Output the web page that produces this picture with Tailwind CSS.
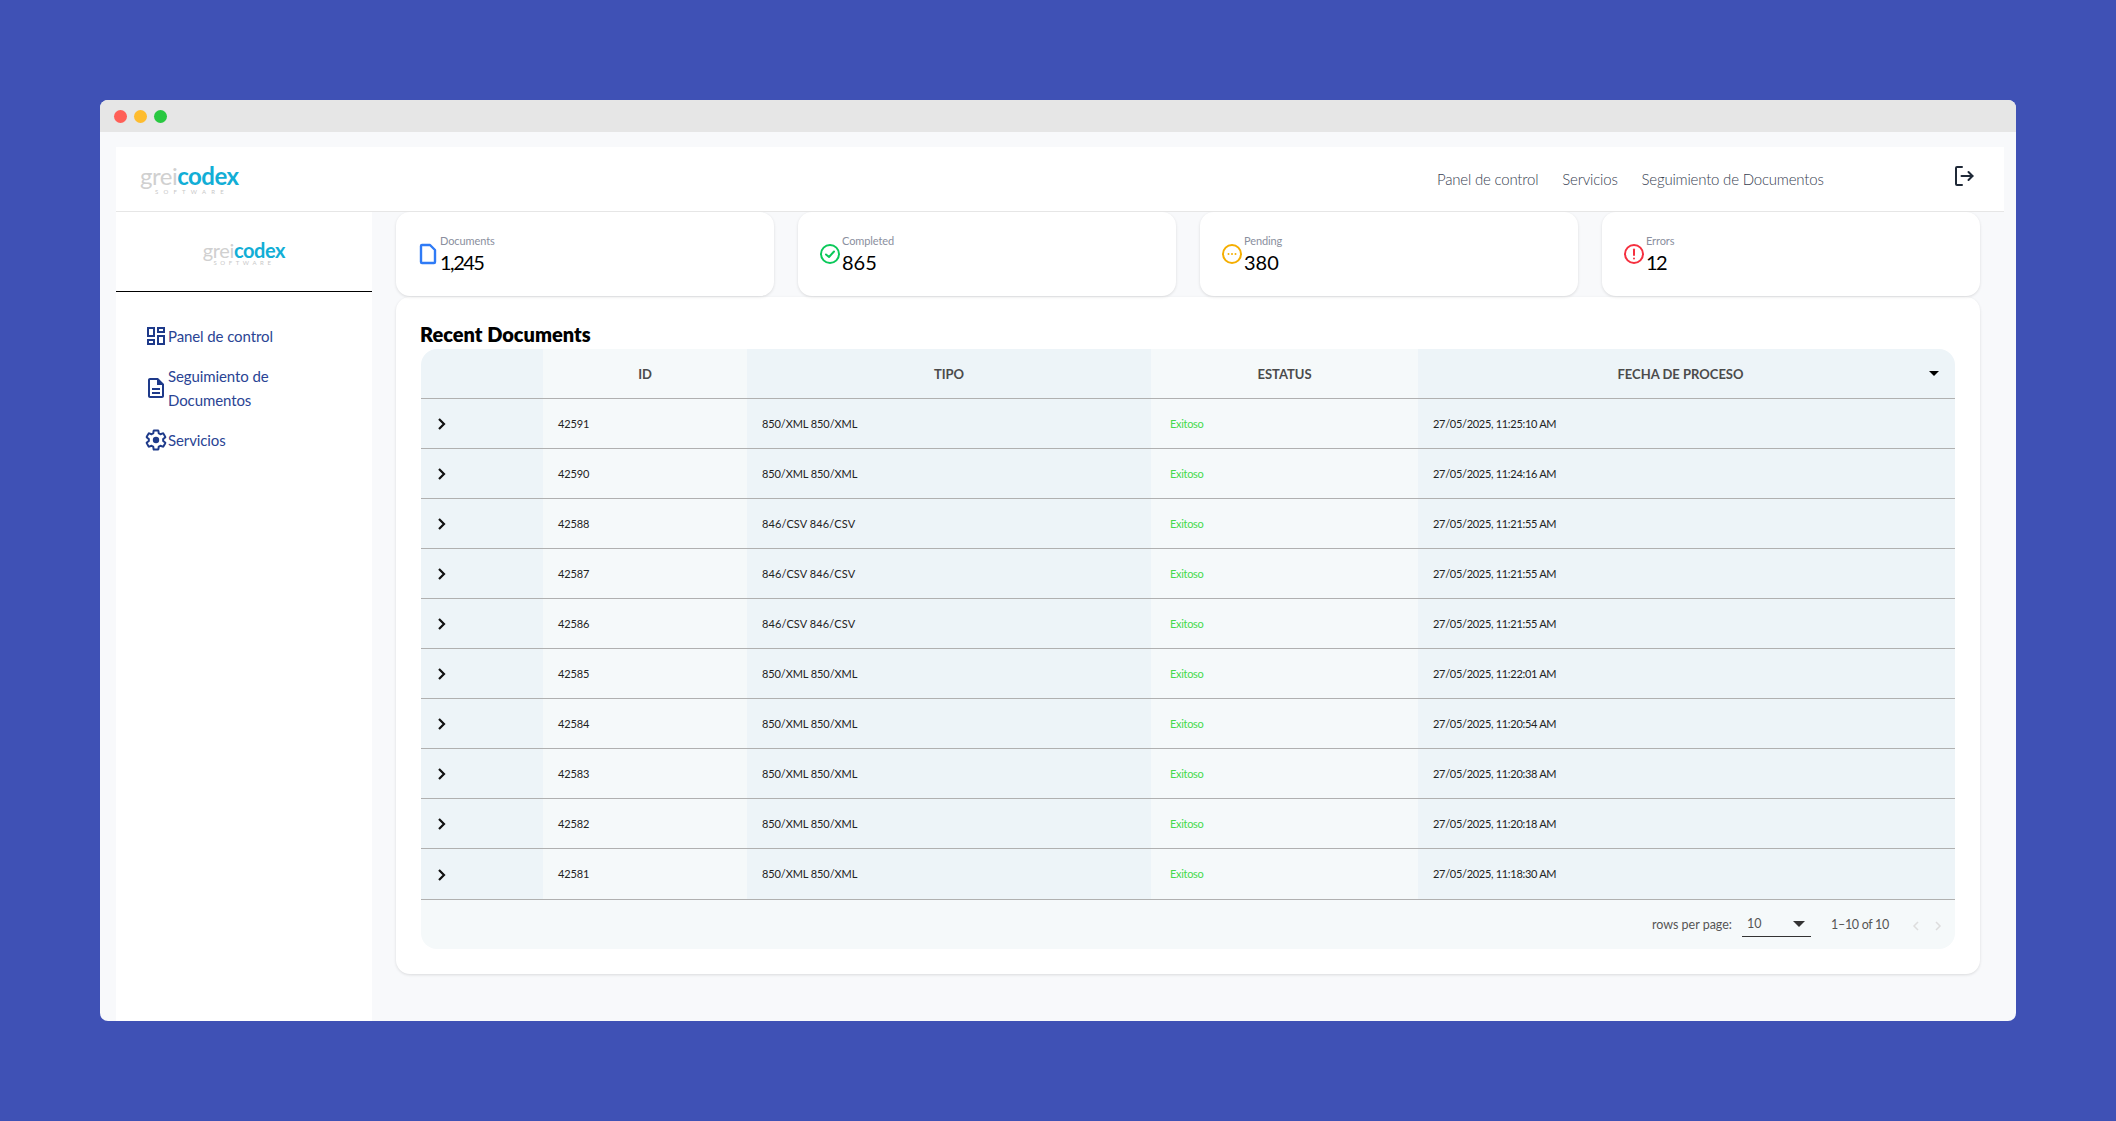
<!DOCTYPE html>
<html lang="es">
<head>
    <meta charset="UTF-8">
    <meta name="viewport" content="width=device-width, initial-scale=1.0">
    <title>Seguimiento de Documentos</title>
    <script src="https://cdn.jsdelivr.net/npm/@tailwindcss/browser@4"></script>
</head>
<body class="bg-[#3f51b5] h-[1121px] overflow-hidden pt-[100px] pl-[100px] font-['Lato',sans-serif]">
    <!-- ventana -->
    <div class="w-[1916px] h-[921px] rounded-[8px] overflow-hidden bg-[#f8f9fb] flex flex-col">
        <div class="h-[32px] shrink-0 bg-[#e6e6e6] flex items-center gap-[7px] pl-[13.5px]">
            <span class="w-[13px] h-[13px] rounded-full bg-[#ff5f57]"></span>
            <span class="w-[13px] h-[13px] rounded-full bg-[#febc2e]"></span>
            <span class="w-[13px] h-[13px] rounded-full bg-[#28c840]"></span>
        </div>

        <div class="flex-1 flex flex-col pt-[15px] pl-[16px] pr-[12px] min-h-0">
            <!-- barra superior -->
            <header class="h-[65px] shrink-0 bg-white border-b border-[#e6e6e6] flex relative">
                <div class="ml-[24px] mt-[17px] w-[100px]">
                    <div class="text-[24px] h-[24px] leading-[24px] tracking-[-0.5px] whitespace-nowrap"><span class="text-[#d0d0d0] font-normal">grei</span><span class="text-[#12aed6] font-bold">codex</span></div>
                    <div class="text-[6px] h-[7px] leading-[7px] tracking-[5.2px] text-[#c8c8c8] pl-[15px] whitespace-nowrap">SOFTWARE</div>
                </div>
                <nav class="absolute left-[1321px] top-[20px] flex gap-[24px] text-[15px] leading-[24px] tracking-[-0.2px] text-[#374151] font-light whitespace-nowrap">
                    <a>Panel de control</a>
                    <a>Servicios</a>
                    <a>Seguimiento de Documentos</a>
                </nav>
                <svg class="absolute left-[1836px] top-[17px] text-[#1f2937]" width="24" height="24" viewBox="0 0 24 24" fill="none" stroke="currentColor" stroke-width="2" stroke-linecap="round" stroke-linejoin="round"><path d="M10 3H5a1 1 0 0 0-1 1v16a1 1 0 0 0 1 1h5"/><path d="M9.500 12h11"/><path d="M16.500 8l4 4-4 4"/></svg>
            </header>

            <div class="flex-1 flex min-h-0">
                <!-- lateral -->
                <aside class="w-[256px] shrink-0 bg-white">
                    <div class="h-[80px] border-b-[1.500px] border-black flex flex-col items-center pt-[28px]">
                        <div class="text-[20px] h-[20px] leading-[20px] tracking-[-0.4px] whitespace-nowrap"><span class="text-[#d0d0d0] font-normal">grei</span><span class="text-[#12aed6] font-bold">codex</span></div>
                        <div class="text-[6px] h-[6px] leading-[6px] tracking-[3.6px] text-[#c8c8c8] whitespace-nowrap">SOFTWARE</div>
                    </div>
                    <nav class="pt-[32px] pl-[28px] flex flex-col gap-[16px] text-[15px] leading-[24px] tracking-[-0.1px] text-[#2a4494]">
                        <a class="flex items-center">
                            <svg class="w-[24px] h-[24px] shrink-0 text-[#1e3a8a]" viewBox="0 0 24 24" fill="currentColor"><path d="M19 5v2h-4V5h4M9 5v6H5V5h4m10 8v6h-4v-6h4M9 17v2H5v-2h4M21 3h-8v6h8V3zM11 3H3v10h8V3zm10 8h-8v10h8V11zm-10 4H3v6h8v-6z"/></svg>
                            <span>Panel de control</span>
                        </a>
                        <a class="flex items-center">
                            <svg class="w-[24px] h-[24px] shrink-0 text-[#1e3a8a]" viewBox="0 0 24 24" fill="currentColor"><path d="M8 16h8v2H8zm0-4h8v2H8zm6-10H6c-1.100 0-2 .9-2 2v16c0 1.100.89 2 1.990 2H18c1.100 0 2-.9 2-2V8l-6-6zm4 18H6V4h7v5h5v11z"/></svg>
                            <span class="w-[130px]">Seguimiento de Documentos</span>
                        </a>
                        <a class="flex items-center">
                            <svg class="w-[24px] h-[24px] shrink-0 text-[#1e3a8a]" viewBox="0 0 24 24"><path fill="none" stroke="currentColor" stroke-width="2" stroke-linejoin="round" d="M19.140 12.940c.04-.3.06-.61.06-.94 0-.32-.02-.64-.07-.94l2.030-1.580c.18-.14.23-.41.12-.61l-1.920-3.320c-.12-.22-.37-.29-.59-.22l-2.390.96c-.5-.38-1.030-.7-1.620-.94l-.36-2.540c-.04-.24-.24-.41-.48-.41h-3.840c-.24 0-.43.17-.47.41l-.36 2.540c-.59.24-1.130.57-1.620.94l-2.390-.96c-.22-.08-.47 0-.59.22L2.740 8.870c-.12.21-.08.47.12.61l2.030 1.580c-.05.3-.09.63-.09.94s.02.64.07.94l-2.030 1.580c-.18.14-.23.41-.12.61l1.920 3.320c.12.22.37.29.59.22l2.390-.96c.5.38 1.030.7 1.620.94l.36 2.540c.05.24.24.41.48.41h3.840c.24 0 .44-.17.47-.41l.36-2.540c.59-.24 1.130-.56 1.620-.94l2.390.96c.22.08.47 0 .59-.22l1.920-3.320c.12-.22.07-.47-.12-.61l-2.010-1.580z"/><circle cx="12" cy="12" r="3.200" fill="currentColor"/></svg>
                            <span>Servicios</span>
                        </a>
                    </nav>
                </aside>

                <!-- contenido -->
                <main class="w-[1584px] ml-[24px]">
                    <div class="grid grid-cols-4 gap-[24px]">
                        <div class="h-[84px] bg-white rounded-[14px] shadow-[0_1px_3px_rgba(0,0,0,0.12)] pl-[20px] flex items-center">
                            <svg class="w-[24px] h-[24px] shrink-0 text-[#2f7bf6]" viewBox="0 0 24 24" fill="none" stroke="currentColor" stroke-width="2.400" stroke-linejoin="round"><path d="M14 3H6a1 1 0 0 0-1 1v16a1 1 0 0 0 1 1h12a1 1 0 0 0 1-1V8z"/></svg>
                            <div>
                                <p class="text-[11px] leading-[16px] tracking-[-0.1px] text-[#8a8f9e]">Documents</p>
                                <p class="text-[20px] leading-[26px] tracking-[-1.5px] text-black">1,245</p>
                            </div>
                        </div>
                        <div class="h-[84px] bg-white rounded-[14px] shadow-[0_1px_3px_rgba(0,0,0,0.12)] pl-[20px] flex items-center">
                            <svg class="w-[24px] h-[24px] shrink-0 text-[#0bc95a]" viewBox="0 0 24 24" fill="none" stroke="currentColor" stroke-width="2" stroke-linecap="round" stroke-linejoin="round"><circle cx="12" cy="12" r="9"/><path d="M8 12.500l3 2.500 5-5.500"/></svg>
                            <div>
                                <p class="text-[11px] leading-[16px] tracking-[-0.1px] text-[#8a8f9e]">Completed</p>
                                <p class="text-[20px] leading-[26px] text-black">865</p>
                            </div>
                        </div>
                        <div class="h-[84px] bg-white rounded-[14px] shadow-[0_1px_3px_rgba(0,0,0,0.12)] pl-[20px] flex items-center">
                            <svg class="w-[24px] h-[24px] shrink-0 text-[#f5ae00]" viewBox="0 0 24 24" fill="none" stroke="currentColor" stroke-width="2"><circle cx="12" cy="12" r="9"/><circle cx="8.500" cy="12" r="1" fill="currentColor" stroke="none"/><circle cx="12" cy="12" r="1" fill="currentColor" stroke="none"/><circle cx="15.500" cy="12" r="1" fill="currentColor" stroke="none"/></svg>
                            <div>
                                <p class="text-[11px] leading-[16px] tracking-[-0.1px] text-[#8a8f9e]">Pending</p>
                                <p class="text-[20px] leading-[26px] text-black">380</p>
                            </div>
                        </div>
                        <div class="h-[84px] bg-white rounded-[14px] shadow-[0_1px_3px_rgba(0,0,0,0.12)] pl-[20px] flex items-center">
                            <svg class="w-[24px] h-[24px] shrink-0 text-[#f5303f]" viewBox="0 0 24 24" fill="none" stroke="currentColor" stroke-width="2" stroke-linecap="round"><circle cx="12" cy="12" r="9"/><path d="M12 7.500v5.500"/><path d="M12 16.500v.1"/></svg>
                            <div>
                                <p class="text-[11px] leading-[16px] tracking-[-0.1px] text-[#8a8f9e]">Errors</p>
                                <p class="text-[20px] leading-[26px] tracking-[-1.5px] text-black">12</p>
                            </div>
                        </div>
                    </div>

                    <div class="mt-px h-[677px] bg-white rounded-[14px] shadow-[0_1px_3px_rgba(0,0,0,0.12)] px-[25px] pt-[25px]">
                        <h2 class="h-[27px] text-[20px] leading-[24px] font-extrabold text-black -ml-px">Recent Documents</h2>
                        <div class="rounded-[16px] overflow-hidden">
                            <table class="w-[1534px] table-fixed border-collapse text-[11px] text-[#222]">
                                <colgroup>
                                    <col class="w-[122px]"><col class="w-[204px]"><col class="w-[404px]"><col class="w-[267px]"><col class="w-[537px]">
                                </colgroup>
                                <thead>
                                    <tr class="h-[49px] border-b border-[#b0b0b0] text-[#4b4b4b] text-[13px] font-bold">
                                        <th class="bg-[#edf4f8]"></th>
                                        <th class="bg-[#f5f9fa] pt-[2px]">ID</th>
                                        <th class="bg-[#edf4f8] pt-[2px]">TIPO</th>
                                        <th class="bg-[#f5f9fa] pt-[2px]">ESTATUS</th>
                                        <th class="bg-[#edf4f8] relative pr-[12px] pt-[2px]">FECHA DE PROCESO<span class="absolute right-[16px] top-[22px] w-0 h-0 border-x-[5px] border-x-transparent border-t-[5px] border-t-black"></span></th>
                                    </tr>
                                </thead>
                                <tbody>
                                    <tr class="h-[50px] border-b border-[#b0b0b0]">
                                        <td class="bg-[#edf4f8] pl-[16px] pt-[2px]"><svg width="10" height="12" viewBox="0 0 10 12" fill="none" stroke="#111" stroke-width="2.200"><path d="M2 1l5 5-5 5"/></svg></td>
                                        <td class="bg-[#f5f9fa] pl-[15px] pt-[2px] tracking-[-0.1px]">42591</td>
                                        <td class="bg-[#edf4f8] pl-[15px] pt-[2px] tracking-[-0.1px]">850/XML 850/XML</td>
                                        <td class="bg-[#f5f9fa] pl-[19px] pt-[2px] tracking-[-0.3px] text-[#45d94a]">Exitoso</td>
                                        <td class="bg-[#edf4f8] pl-[15px] pt-[2px] tracking-[-0.3px]">27/05/2025, 11:25:10 AM</td>
                                    </tr>
                                    <tr class="h-[50px] border-b border-[#b0b0b0]">
                                        <td class="bg-[#edf4f8] pl-[16px] pt-[2px]"><svg width="10" height="12" viewBox="0 0 10 12" fill="none" stroke="#111" stroke-width="2.200"><path d="M2 1l5 5-5 5"/></svg></td>
                                        <td class="bg-[#f5f9fa] pl-[15px] pt-[2px] tracking-[-0.1px]">42590</td>
                                        <td class="bg-[#edf4f8] pl-[15px] pt-[2px] tracking-[-0.1px]">850/XML 850/XML</td>
                                        <td class="bg-[#f5f9fa] pl-[19px] pt-[2px] tracking-[-0.3px] text-[#45d94a]">Exitoso</td>
                                        <td class="bg-[#edf4f8] pl-[15px] pt-[2px] tracking-[-0.3px]">27/05/2025, 11:24:16 AM</td>
                                    </tr>
                                    <tr class="h-[50px] border-b border-[#b0b0b0]">
                                        <td class="bg-[#edf4f8] pl-[16px] pt-[2px]"><svg width="10" height="12" viewBox="0 0 10 12" fill="none" stroke="#111" stroke-width="2.200"><path d="M2 1l5 5-5 5"/></svg></td>
                                        <td class="bg-[#f5f9fa] pl-[15px] pt-[2px] tracking-[-0.1px]">42588</td>
                                        <td class="bg-[#edf4f8] pl-[15px] pt-[2px] tracking-[0.1px]">846/CSV 846/CSV</td>
                                        <td class="bg-[#f5f9fa] pl-[19px] pt-[2px] tracking-[-0.3px] text-[#45d94a]">Exitoso</td>
                                        <td class="bg-[#edf4f8] pl-[15px] pt-[2px] tracking-[-0.3px]">27/05/2025, 11:21:55 AM</td>
                                    </tr>
                                    <tr class="h-[50px] border-b border-[#b0b0b0]">
                                        <td class="bg-[#edf4f8] pl-[16px] pt-[2px]"><svg width="10" height="12" viewBox="0 0 10 12" fill="none" stroke="#111" stroke-width="2.200"><path d="M2 1l5 5-5 5"/></svg></td>
                                        <td class="bg-[#f5f9fa] pl-[15px] pt-[2px] tracking-[-0.1px]">42587</td>
                                        <td class="bg-[#edf4f8] pl-[15px] pt-[2px] tracking-[0.1px]">846/CSV 846/CSV</td>
                                        <td class="bg-[#f5f9fa] pl-[19px] pt-[2px] tracking-[-0.3px] text-[#45d94a]">Exitoso</td>
                                        <td class="bg-[#edf4f8] pl-[15px] pt-[2px] tracking-[-0.3px]">27/05/2025, 11:21:55 AM</td>
                                    </tr>
                                    <tr class="h-[50px] border-b border-[#b0b0b0]">
                                        <td class="bg-[#edf4f8] pl-[16px] pt-[2px]"><svg width="10" height="12" viewBox="0 0 10 12" fill="none" stroke="#111" stroke-width="2.200"><path d="M2 1l5 5-5 5"/></svg></td>
                                        <td class="bg-[#f5f9fa] pl-[15px] pt-[2px] tracking-[-0.1px]">42586</td>
                                        <td class="bg-[#edf4f8] pl-[15px] pt-[2px] tracking-[0.1px]">846/CSV 846/CSV</td>
                                        <td class="bg-[#f5f9fa] pl-[19px] pt-[2px] tracking-[-0.3px] text-[#45d94a]">Exitoso</td>
                                        <td class="bg-[#edf4f8] pl-[15px] pt-[2px] tracking-[-0.3px]">27/05/2025, 11:21:55 AM</td>
                                    </tr>
                                    <tr class="h-[50px] border-b border-[#b0b0b0]">
                                        <td class="bg-[#edf4f8] pl-[16px] pt-[2px]"><svg width="10" height="12" viewBox="0 0 10 12" fill="none" stroke="#111" stroke-width="2.200"><path d="M2 1l5 5-5 5"/></svg></td>
                                        <td class="bg-[#f5f9fa] pl-[15px] pt-[2px] tracking-[-0.1px]">42585</td>
                                        <td class="bg-[#edf4f8] pl-[15px] pt-[2px] tracking-[-0.1px]">850/XML 850/XML</td>
                                        <td class="bg-[#f5f9fa] pl-[19px] pt-[2px] tracking-[-0.3px] text-[#45d94a]">Exitoso</td>
                                        <td class="bg-[#edf4f8] pl-[15px] pt-[2px] tracking-[-0.3px]">27/05/2025, 11:22:01 AM</td>
                                    </tr>
                                    <tr class="h-[50px] border-b border-[#b0b0b0]">
                                        <td class="bg-[#edf4f8] pl-[16px] pt-[2px]"><svg width="10" height="12" viewBox="0 0 10 12" fill="none" stroke="#111" stroke-width="2.200"><path d="M2 1l5 5-5 5"/></svg></td>
                                        <td class="bg-[#f5f9fa] pl-[15px] pt-[2px] tracking-[-0.1px]">42584</td>
                                        <td class="bg-[#edf4f8] pl-[15px] pt-[2px] tracking-[-0.1px]">850/XML 850/XML</td>
                                        <td class="bg-[#f5f9fa] pl-[19px] pt-[2px] tracking-[-0.3px] text-[#45d94a]">Exitoso</td>
                                        <td class="bg-[#edf4f8] pl-[15px] pt-[2px] tracking-[-0.3px]">27/05/2025, 11:20:54 AM</td>
                                    </tr>
                                    <tr class="h-[50px] border-b border-[#b0b0b0]">
                                        <td class="bg-[#edf4f8] pl-[16px] pt-[2px]"><svg width="10" height="12" viewBox="0 0 10 12" fill="none" stroke="#111" stroke-width="2.200"><path d="M2 1l5 5-5 5"/></svg></td>
                                        <td class="bg-[#f5f9fa] pl-[15px] pt-[2px] tracking-[-0.1px]">42583</td>
                                        <td class="bg-[#edf4f8] pl-[15px] pt-[2px] tracking-[-0.1px]">850/XML 850/XML</td>
                                        <td class="bg-[#f5f9fa] pl-[19px] pt-[2px] tracking-[-0.3px] text-[#45d94a]">Exitoso</td>
                                        <td class="bg-[#edf4f8] pl-[15px] pt-[2px] tracking-[-0.3px]">27/05/2025, 11:20:38 AM</td>
                                    </tr>
                                    <tr class="h-[50px] border-b border-[#b0b0b0]">
                                        <td class="bg-[#edf4f8] pl-[16px] pt-[2px]"><svg width="10" height="12" viewBox="0 0 10 12" fill="none" stroke="#111" stroke-width="2.200"><path d="M2 1l5 5-5 5"/></svg></td>
                                        <td class="bg-[#f5f9fa] pl-[15px] pt-[2px] tracking-[-0.1px]">42582</td>
                                        <td class="bg-[#edf4f8] pl-[15px] pt-[2px] tracking-[-0.1px]">850/XML 850/XML</td>
                                        <td class="bg-[#f5f9fa] pl-[19px] pt-[2px] tracking-[-0.3px] text-[#45d94a]">Exitoso</td>
                                        <td class="bg-[#edf4f8] pl-[15px] pt-[2px] tracking-[-0.3px]">27/05/2025, 11:20:18 AM</td>
                                    </tr>
                                    <tr class="h-[51px] border-b border-[#b0b0b0]">
                                        <td class="bg-[#edf4f8] pl-[16px] pt-[2px]"><svg width="10" height="12" viewBox="0 0 10 12" fill="none" stroke="#111" stroke-width="2.200"><path d="M2 1l5 5-5 5"/></svg></td>
                                        <td class="bg-[#f5f9fa] pl-[15px] pt-[2px] tracking-[-0.1px]">42581</td>
                                        <td class="bg-[#edf4f8] pl-[15px] pt-[2px] tracking-[-0.1px]">850/XML 850/XML</td>
                                        <td class="bg-[#f5f9fa] pl-[19px] pt-[2px] tracking-[-0.3px] text-[#45d94a]">Exitoso</td>
                                        <td class="bg-[#edf4f8] pl-[15px] pt-[2px] tracking-[-0.3px]">27/05/2025, 11:18:30 AM</td>
                                    </tr>
                                </tbody>
                            </table>
                            <!-- paginacion -->
                            <div class="h-[49px] pt-[3px] bg-[#f5f9fa] flex items-center justify-end text-[12.5px] text-[#555]">
                                <span>rows per page:</span>
                                <div class="relative w-[69px] h-[22px] ml-[10px] border-b border-[#333] pl-[5px] leading-[18px]">10<span class="absolute right-[6px] top-[6px] w-0 h-0 border-x-[6px] border-x-transparent border-t-[6px] border-t-[#333]"></span></div>
                                <span class="ml-[20px] tracking-[-0.3px]">1–10 of 10</span>
                                <svg class="ml-[21px]" width="12" height="12" viewBox="0 0 12 12" fill="none" stroke="#ddd" stroke-width="1.500"><path d="M8 2L4 6l4 4"/></svg>
                                <svg class="ml-[10px] mr-[11px]" width="12" height="12" viewBox="0 0 12 12" fill="none" stroke="#ddd" stroke-width="1.500"><path d="M4 2l4 4-4 4"/></svg>
                            </div>
                        </div>
                    </div>
                </main>
            </div>
        </div>
    </div>
</body>
</html>
